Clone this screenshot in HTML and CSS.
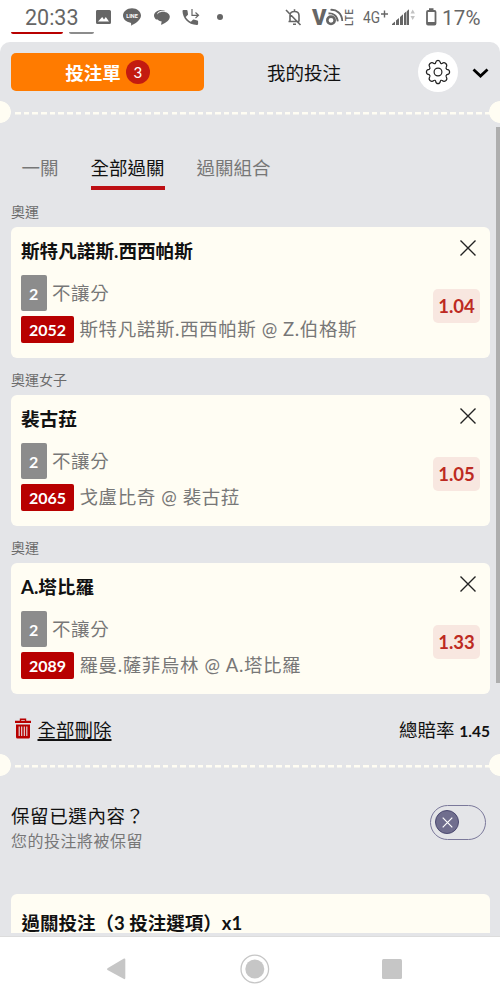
FILE: index.html
```html
<!DOCTYPE html>
<html lang="zh-Hant">
<head>
  <meta charset="UTF-8">
  <meta name="viewport" content="width=device-width, initial-scale=1.0">
  <title>投注單</title>
  <link rel="stylesheet" href="styles.css">
</head>
<body>
  <!-- Phone status bar -->
  <div class="status-bar">
    <span class="clock">20:33</span>
    <svg class="status-icons" width="126" height="31" viewBox="0 0 126 31" fill="#666">
      <path fill-rule="evenodd" d="M3 10h12.500q1.500 0 1.500 1.500v11q0 1.500-1.500 1.500H3.500q-1.500 0-1.500-1.500v-11Q2 10 3 10zM4 21.500h11l-3.200-4.500-1.800 2.500-1.800-2.500z"/>
      <path d="M38 8.200c-5 0-9 3.300-9 7.400 0 3.700 3.100 6.400 7.500 7.100.8.200.7 1.300.6 3 3.500-1.700 9.900-5.400 9.900-10.100 0-4.100-4-7.400-9-7.400z"/>
      <text x="38" y="17.800" class="line-logo" fill="#fff" text-anchor="middle">LINE</text>
      <path d="M67.500 10.800c-2.500.3-4.300 1.700-4.300 3.700 0 1.100.4 1.900 1.100 2.600l-1.800 2.600c-1.500-1.100-2.500-2.700-2.500-4.300 0-3 3.300-5.500 7.500-5.500 1.500 0 2.900.3 4 .8-1.400-.1-2.700-.1-4 .1z"/>
      <path d="M69 11.700c-3.700 0-6.600 2.200-6.600 5 0 2.700 2.600 4.500 5.300 4.800l-.7 3.300c2.700-.9 8.800-3.800 8.800-8.100 0-2.800-3-5-6.800-5z"/>
      <path d="M89.500 10h3.200q.7 0 .8.700l.5 3.500q0 .5-.3.800l-2 2c1.300 2.200 3 3.700 5.200 4.800l2-2q.4-.4.900-.2l3.500.8q.8.200.8.900v2.600q0 1.100-1.200 1.100C94 24.600 88.600 18 88.500 11q0-1 1-1z"/>
      <path d="M98 9v6.300h6M101.500 12.500l3 2.800-3 2.800" fill="none" stroke="#666" stroke-width="1.200"/>
    </svg>
    <span class="more-dot"></span>
    <svg class="signal-icons" width="154" height="31" viewBox="0 0 154 31" fill="#666">
      <path d="M3.500 21.500h11M5 21v-5.500c0-2.600 1.700-4 4.500-4s4.500 1.400 4.500 4V21M9.500 9.200v2M8 24.300h3M1 10l14.500 15" fill="none" stroke="#666" stroke-width="1.600"/>
      <text x="27" y="24.500" class="volte-v">V</text>
      <circle cx="46" cy="20.300" r="3.700" fill="none" stroke="#666" stroke-width="2.600"/>
      <path d="M43.500 13.500c4-.7 8.800 2 9.300 7.800M45.500 9.800c6.200-.6 11.500 4 11.800 11.200" fill="none" stroke="#666" stroke-width="1.800"/>
      <text transform="translate(67.500 26) rotate(-90)" class="volte-lte" textLength="17">LTE</text>
      <text x="78" y="23.200" class="network" textLength="17" lengthAdjust="spacingAndGlyphs">4G</text>
      <path d="M99.500 10.500v7M96 14h7" stroke="#666" stroke-width="1.400"/>
      <path d="M107 25v-1l3-2.500V25zM111 25v-4.500l3-2.500v7zM115 25v-8l3-2.700V25zM119 25V13.500l2.500-2.200V25zM122 11l2-1.800V25h-2z"/>
      <path d="M125.500 13.500l2.200-4 2.200 4zM125.500 16h4.400l-2.200 4z" fill="#c2c2c2"/>
      <rect x="142" y="11" width="8.500" height="13.500" rx="1" fill="none" stroke="#666" stroke-width="1.800"/>
      <path d="M144 8.300h4.500V11H144zM142 22h8.500v3H142z"/>
    </svg>
    <span class="battery">17%</span>
  </div>
  <div class="peek">
    <span class="peek-red"></span>
    <span class="peek-grey"></span>
  </div>

  <main class="slip">
    <!-- Header -->
    <div class="slip-header">
      <button class="btn-slip">投注單<span class="count">3</span></button>
      <span class="my-bets">我的投注</span>
      <button class="btn-settings">
        <svg width="26" height="26" viewBox="0 0 26 26" fill="none" stroke="#222" stroke-width="1.200" stroke-linejoin="round">
          <path d="M10.700 3.500Q11 1.400 13 1.400T15.300 3.500Q15.700 5 17 4.500Q19 2.900 20.500 4.300Q22.600 6 21.300 8Q20.500 9.300 21.700 10.300Q24.600 10.500 24.600 13T21.700 15.700Q20.500 16.700 21.300 18Q22.600 20 21 21.500Q19 23.100 17.200 21.500Q15.700 20.700 15.300 22.300Q15 24.600 13 24.600T10.700 22.300Q10.300 20.700 8.800 21.500Q7 23.100 5 21.500Q3.400 20 4.700 18Q5.500 16.700 4.300 15.700Q1.400 15.500 1.400 13T4.300 10.300Q5.500 9.300 4.700 8Q3.400 6 5 4.500Q7 2.900 8.800 4.500Q10.300 5.200 10.700 3.500z"/>
          <circle cx="13" cy="13" r="3.900"/>
        </svg>
      </button>
      <svg class="chevron" width="17" height="11" viewBox="0 0 17 11" fill="none" stroke="#000" stroke-width="2.800">
        <path d="M1.500 1.500l7 6.500 7-6.500"/>
      </svg>
    </div>

    <div class="tear"></div>

    <!-- Tabs -->
    <nav class="tabs">
      <a class="tab">一關</a>
      <a class="tab active">全部過關</a>
      <a class="tab">過關組合</a>
    </nav>

    <!-- Selections -->
    <div class="league">奧運</div>
    <section class="card">
      <div class="info">
        <h2>斯特凡諾斯.西西帕斯</h2>
        <div class="row market"><span class="tag grey">2</span><span class="label">不讓分</span></div>
        <div class="row match"><span class="tag red">2052</span><span class="label">斯特凡諾斯.西西帕斯 @ Z.伯格斯</span></div>
      </div>
      <div class="side">
        <svg class="close" width="16" height="16" viewBox="0 0 16 16"><path d="M.5.500l15 15M15.500.5l-15 15"/></svg>
        <span class="odds">1.04</span>
      </div>
    </section>

    <div class="league">奧運女子</div>
    <section class="card">
      <div class="info">
        <h2>裴古菈</h2>
        <div class="row market"><span class="tag grey">2</span><span class="label">不讓分</span></div>
        <div class="row match"><span class="tag red">2065</span><span class="label">戈盧比奇 @ 裴古菈</span></div>
      </div>
      <div class="side">
        <svg class="close" width="16" height="16" viewBox="0 0 16 16"><path d="M.5.500l15 15M15.500.5l-15 15"/></svg>
        <span class="odds">1.05</span>
      </div>
    </section>

    <div class="league">奧運</div>
    <section class="card">
      <div class="info">
        <h2>A.塔比羅</h2>
        <div class="row market"><span class="tag grey">2</span><span class="label">不讓分</span></div>
        <div class="row match"><span class="tag red">2089</span><span class="label">羅曼.薩菲烏林 @ A.塔比羅</span></div>
      </div>
      <div class="side">
        <svg class="close" width="16" height="16" viewBox="0 0 16 16"><path d="M.5.500l15 15M15.500.5l-15 15"/></svg>
        <span class="odds">1.33</span>
      </div>
    </section>

    <!-- Delete all / total odds -->
    <div class="summary">
      <svg width="16" height="21" viewBox="0 0 16 21">
        <path d="M5.500 3V1.200h5V3" fill="none" stroke="#b80000" stroke-width="1.400"/>
        <path d="M0 2.700h16v2.300H0zM1 6.500h14V19q0 1.500-1.500 1.500h-11Q1 20.500 1 19z" fill="#b80000"/>
        <path d="M4.200 8.500v9.500M6.700 8.500v9.500M9.300 8.500v9.500M11.800 8.500v9.500" stroke="#e4e5e8" stroke-width="1.100"/>
      </svg>
      <a class="delete-all">全部刪除</a>
      <span class="total">總賠率 <b>1.45</b></span>
    </div>

    <div class="tear"></div>

    <!-- Keep selections -->
    <div class="keep">
      <div>
        <div class="keep-title">保留已選內容？</div>
        <div class="keep-note">您的投注將被保留</div>
      </div>
      <div class="toggle">
        <span class="knob">
          <svg width="11" height="11" viewBox="0 0 11 11"><path d="M.7.700l9.600 9.600M10.300.7L.7 10.300" stroke="#fff" stroke-width="1.200"/></svg>
        </span>
      </div>
    </div>

    <section class="stake">過關投注（3 投注選項）x1</section>
    <div class="scrollbar"></div>
  </main>

  <!-- Phone navigation -->
  <div class="nav-bar">
    <svg width="500" height="63" viewBox="0 0 500 63" fill="#c6c6c6">
      <path d="M107.500 31.300L124 21.500q1.300-.5 1.300 1v18.500q0 1.500-1.300 1L107.500 33q-1-.8 0-1.700z"/>
      <circle cx="254.800" cy="32" r="13.800" fill="none" stroke="#c6c6c6" stroke-width="1.300"/>
      <circle cx="254.800" cy="32" r="9.500"/>
      <rect x="382" y="22" width="20" height="20" rx="1.500"/>
    </svg>
  </div>
</body>
</html>
```

FILE: styles.css
```css
/* General Styles */
* {
  box-sizing: border-box;
}

body {
  margin: 0;
  width: 500px;
  height: 1000px;
  overflow: hidden;
  display: flex;
  flex-direction: column;
  background-color: #fff;
  color: #111;
  font-family: Lato, 'Noto Sans CJK TC', sans-serif;
  font-size: 18.5px;
}

button {
  border: none;
  padding: 0;
  font-family: inherit;
}

svg {
  display: block;
  flex-shrink: 0;
}

/* Status bar */
.status-bar {
  height: 32px;
  display: flex;
  align-items: flex-start;
  padding-left: 25px;
  color: #666;
  font-family: Roboto, sans-serif;
}

.clock {
  width: 69px;
  font-size: 21.5px;
  line-height: 36px;
}

.more-dot {
  width: 6px;
  height: 6px;
  margin-top: 14px;
  margin-left: -3px;
  border-radius: 50%;
  background-color: #666;
}

.signal-icons {
  margin-left: 62px;
}

.battery {
  margin-left: 3px;
  font-size: 20.5px;
  line-height: 36px;
  letter-spacing: 0.2px;
}

.line-logo {
  font: bold 5.5px Roboto, sans-serif;
}

.volte-v {
  font: 900 22px Roboto, sans-serif;
}

.volte-lte {
  font: 500 10px Roboto, sans-serif;
}

.network {
  font: 16px Roboto, sans-serif;
}

/* Edge of the page behind the slip */
.peek {
  height: 10px;
  padding-left: 11px;
  display: flex;
  gap: 6px;
}

.peek span {
  height: 2px;
  border-radius: 0 0 2px 2px;
}

.peek-red {
  width: 52px;
  background-color: #b80000;
}

.peek-grey {
  width: 25px;
  background-color: #8c8c8c;
}

/* Bet slip */
.slip {
  position: relative;
  height: 895px;
  overflow: hidden;
  background-color: #e4e5e8;
  border-radius: 10px 10px 0 0;
  border-bottom: 1px solid #dcdcdc;
}

.slip-header {
  height: 59px;
  padding: 1px 11px 0;
  display: flex;
  align-items: center;
}

.btn-slip {
  width: 193px;
  height: 38px;
  display: flex;
  align-items: center;
  justify-content: center;
  gap: 5px;
  background-color: #ff7b00;
  color: #fff;
  border-radius: 5px;
  font-size: 18.5px;
  font-weight: bold;
}

.count {
  width: 24px;
  height: 24px;
  line-height: 24px;
  border-radius: 50%;
  background-color: #c31b10;
  font-size: 15px;
  font-weight: normal;
}

.my-bets {
  width: 151px;
  margin-left: 63px;
}

.btn-settings {
  width: 40px;
  height: 40px;
  display: flex;
  align-items: center;
  justify-content: center;
  border-radius: 50%;
  background-color: #fff;
}

.chevron {
  margin-left: 14px;
  margin-top: 2px;
}

/* Ticket tear line */
.tear {
  height: 22px;
  background:
    radial-gradient(circle at 0 11px, #fffdf3 10.5px, transparent 11.2px),
    radial-gradient(circle at 500px 11px, #fffdf3 10.5px, transparent 11.2px),
    repeating-linear-gradient(90deg, #fffdf3 0 5.5px, transparent 5.5px 8.7px) 15px 11px / 475px 2.5px no-repeat;
}

/* Tabs */
.tabs {
  height: 79px;
  padding: 29px 21.5px 0;
  display: flex;
  gap: 32px;
}

.tab {
  height: 38px;
  line-height: 33px;
  color: #777;
}

.tab.active {
  color: #111;
  border-bottom: 4px solid #bd0f14;
}

/* Selections */
.league {
  height: 25px;
  margin-left: 11px;
  font-size: 14px;
  line-height: 20px;
  color: #6b6b6b;
}

.card {
  width: 479px;
  height: 131px;
  margin: 0 0 12px 11px;
  padding: 10px 10px 0;
  display: flex;
  justify-content: space-between;
  background-color: #fffdf3;
  border-radius: 6px;
}

.card h2 {
  height: 38px;
  margin: 0;
  font-size: 18.6px;
  line-height: 29px;
}

.row {
  display: flex;
  align-items: center;
  color: #777;
  letter-spacing: 0.6px;
  white-space: nowrap;
}

.label {
  padding-bottom: 3px;
}

.market {
  height: 36px;
  margin-bottom: 5px;
}

.match {
  height: 27px;
}

.tag {
  display: flex;
  align-items: center;
  justify-content: center;
  margin-right: 5.5px;
  border-radius: 2px;
  color: #fff;
  font-size: 16px;
  font-weight: bold;
  letter-spacing: 0;
}

.tag.grey {
  width: 25.5px;
  height: 36px;
  background-color: #8c8c8c;
}

.tag.red {
  width: 53px;
  height: 27px;
  background-color: #b80000;
}

.side {
  display: flex;
  flex-direction: column;
  align-items: flex-end;
}

.close {
  margin: 3px 4px 33px 0;
  fill: none;
  stroke: #222;
  stroke-width: 1.4;
}

.odds {
  width: 47px;
  height: 34px;
  line-height: 34px;
  text-align: center;
  border-radius: 5px;
  background-color: #f8e7e0;
  color: #bd2a22;
  font-size: 18.5px;
  font-weight: bold;
}

/* Summary */
.summary {
  height: 48px;
  padding: 0 10px 3px 15px;
  display: flex;
  align-items: center;
}

.delete-all {
  margin-left: 6.5px;
  text-decoration: underline;
  text-decoration-thickness: 1.5px;
  text-underline-offset: 2px;
}

.total {
  margin-left: auto;
}

.total b {
  font-size: 15.5px;
}

/* Keep selections */
.keep {
  height: 118px;
  padding: 29px 14px 0 11px;
  display: flex;
  justify-content: space-between;
}

.keep-title {
  margin-top: -1px;
  line-height: 24px;
  letter-spacing: 0.6px;
}

.keep-note {
  font-size: 16px;
  line-height: 25px;
  letter-spacing: 0.5px;
  color: #777;
}

.toggle {
  width: 56px;
  height: 35px;
  padding: 4px;
  border: 1px solid #7a789a;
  border-radius: 18px;
}

.knob {
  width: 24px;
  height: 24px;
  display: flex;
  align-items: center;
  justify-content: center;
  border: 1px solid #4b4970;
  border-radius: 50%;
  background-color: #706e8e;
}

.stake {
  width: 479px;
  height: 39px;
  margin-left: 11px;
  padding-left: 10.5px;
  background-color: #fffdf3;
  border-radius: 6px 6px 0 0;
  font-weight: bold;
  line-height: 58px;
  overflow: hidden;
}

.scrollbar {
  position: absolute;
  top: 85px;
  right: 0;
  width: 4px;
  height: 556px;
  background-color: #aeaeae;
}

/* Phone navigation */
.nav-bar {
  height: 63px;
}
```
